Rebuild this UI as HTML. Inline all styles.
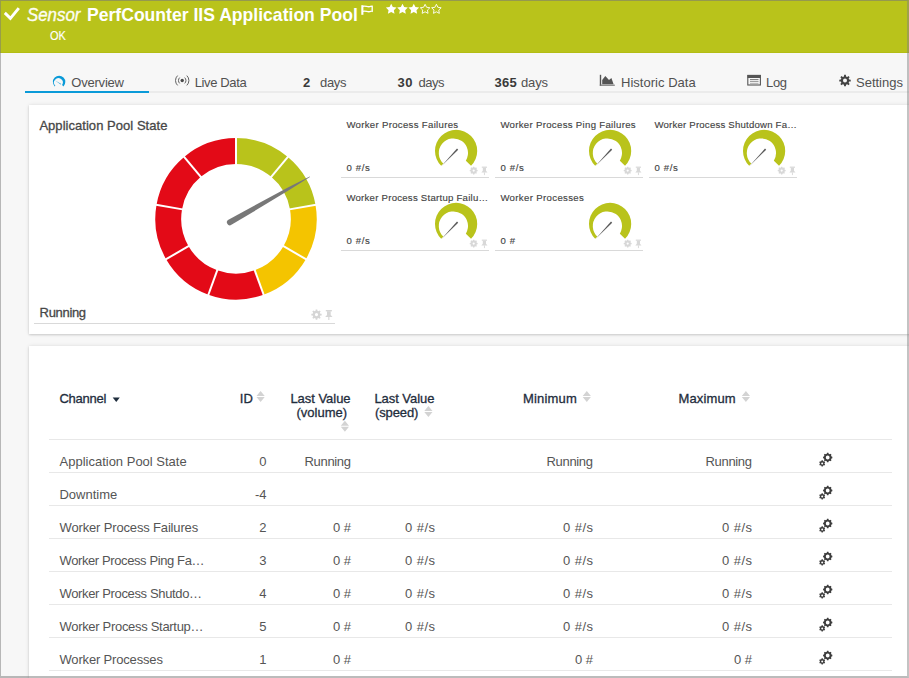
<!DOCTYPE html>
<html><head><meta charset="utf-8"><style>
html,body{margin:0;padding:0;}
body{width:909px;height:678px;overflow:hidden;position:relative;background:#f7f7f7;font-family:"Liberation Sans",sans-serif;}
.t{position:absolute;white-space:nowrap;}
</style></head><body>
<div style="position:absolute;left:0px;top:0px;width:909px;height:678px;background:#f7f7f7;"></div>
<div style="position:absolute;left:0px;top:0px;width:909px;height:53px;background:#b9c31b;"></div>
<div style="position:absolute;left:0px;top:52px;width:909px;height:1px;background:#b3bd14;"></div>
<svg style="position:absolute;left:0;top:0" width="30" height="30"><polyline points="4.8,12.9 10.4,18.3 18.8,8.1" fill="none" stroke="#fff" stroke-width="2.9" stroke-linecap="butt"/></svg>
<div class="t" style="left:27.20px;top:4.26px;font-size:18px;line-height:22px;color:#fdfdf2;font-style:italic;transform:scaleX(0.9363);transform-origin:0 0;-webkit-text-stroke:0.35px #fdfdf2;">Sensor</div>
<div class="t" style="left:87.00px;top:4.19px;font-size:18.2px;line-height:22px;color:#ffffff;font-weight:700;transform:scaleX(0.9664);transform-origin:0 0;">PerfCounter IIS Application Pool</div>
<svg style="position:absolute;left:355px;top:0px" width="25" height="20" viewBox="0 0 25 20"><rect x="6.3" y="5.2" width="2.1" height="9.6" fill="#fff"/><path d="M7.8 6.4 C10.2 5.4 12.4 7.2 14.6 6.7 C15.8 6.4 16.6 6.0 17.2 6.2 L17.2 11.2 C16.6 11.0 15.8 11.4 14.6 11.7 C12.4 12.2 10.2 10.4 7.8 11.4" fill="none" stroke="#fff" stroke-width="1.35"/></svg>
<svg style="position:absolute;left:380px;top:0" width="70" height="20"><polygon points="11.20,3.70 12.85,7.03 16.53,7.57 13.86,10.17 14.49,13.83 11.20,12.10 7.91,13.83 8.54,10.17 5.87,7.57 9.55,7.03" fill="#fff"/><polygon points="22.50,3.70 24.15,7.03 27.83,7.57 25.16,10.17 25.79,13.83 22.50,12.10 19.21,13.83 19.84,10.17 17.17,7.57 20.85,7.03" fill="#fff"/><polygon points="33.80,3.70 35.45,7.03 39.13,7.57 36.46,10.17 37.09,13.83 33.80,12.10 30.51,13.83 31.14,10.17 28.47,7.57 32.15,7.03" fill="#fff"/><polygon points="45.10,4.30 46.57,7.28 49.86,7.75 47.48,10.07 48.04,13.35 45.10,11.80 42.16,13.35 42.72,10.07 40.34,7.75 43.63,7.28" fill="none" stroke="#fff" stroke-width="0.9" stroke-linejoin="round"/><polygon points="56.40,4.30 57.87,7.28 61.16,7.75 58.78,10.07 59.34,13.35 56.40,11.80 53.46,13.35 54.02,10.07 51.64,7.75 54.93,7.28" fill="none" stroke="#fff" stroke-width="0.9" stroke-linejoin="round"/></svg>
<div class="t" style="left:50.30px;top:28.70px;font-size:12.4px;line-height:15px;color:#ffffff;transform:scaleX(0.8875);transform-origin:0 0;-webkit-text-stroke:0.15px #fff;">OK</div>
<div class="t" style="left:71.30px;top:75.00px;font-size:13px;line-height:16px;color:#515151;letter-spacing:-0.211px;">Overview</div>
<div class="t" style="left:194.70px;top:75.00px;font-size:13px;line-height:16px;color:#515151;letter-spacing:-0.365px;">Live Data</div>
<div class="t" style="left:303.00px;top:75.00px;font-size:13px;line-height:16px;color:#3a3a3a;font-weight:700;">2</div>
<div class="t" style="left:320.00px;top:75.00px;font-size:13px;line-height:16px;color:#515151;letter-spacing:-0.354px;">days</div>
<div class="t" style="left:397.60px;top:75.00px;font-size:13px;line-height:16px;color:#3a3a3a;font-weight:700;letter-spacing:0.439px;">30</div>
<div class="t" style="left:418.40px;top:75.00px;font-size:13px;line-height:16px;color:#515151;letter-spacing:-0.454px;">days</div>
<div class="t" style="left:494.60px;top:75.00px;font-size:13px;line-height:16px;color:#3a3a3a;font-weight:700;letter-spacing:0.254px;">365</div>
<div class="t" style="left:521.00px;top:75.00px;font-size:13px;line-height:16px;color:#515151;letter-spacing:-0.154px;">days</div>
<div class="t" style="left:621.00px;top:75.00px;font-size:13px;line-height:16px;color:#515151;letter-spacing:0.024px;">Historic Data</div>
<div class="t" style="left:766.00px;top:75.00px;font-size:13px;line-height:16px;color:#515151;letter-spacing:-0.346px;">Log</div>
<div class="t" style="left:856.00px;top:75.00px;font-size:13px;line-height:16px;color:#515151;">Settings</div>
<div style="position:absolute;left:25px;top:91px;width:884px;height:2px;background:#ebebeb;"></div>
<div style="position:absolute;left:25px;top:91px;width:124px;height:2px;background:#0a9ad8;"></div>
<svg style="position:absolute;left:0;top:0" width="100" height="100"><path d="M54.72,86.38 A6.2 6.2 0 1 1 63.48,86.38 L62.09,84.99 A4.4 4.4 0 1 0 55.34,85.76 Z" fill="#0a9ad8"/><path d="M55.2,80.4 L61.2,83.9 L60.7,84.6 Z" fill="#0a9ad8"/></svg>
<svg style="position:absolute;left:174px;top:72px" width="18" height="16" viewBox="0 0 18 16"><circle cx="8.2" cy="8.5" r="1.7" fill="#4a4a4a"/><path d="M5.7 5.6 A4 4 0 0 0 5.7 11.4" fill="none" stroke="#5a5a5a" stroke-width="0.95"/><path d="M10.7 5.6 A4 4 0 0 1 10.7 11.4" fill="none" stroke="#5a5a5a" stroke-width="0.95"/><path d="M3.6 3.6 A6.8 6.8 0 0 0 3.6 13.4" fill="none" stroke="#5a5a5a" stroke-width="0.95"/><path d="M12.8 3.6 A6.8 6.8 0 0 1 12.8 13.4" fill="none" stroke="#5a5a5a" stroke-width="0.95"/></svg>
<svg style="position:absolute;left:596px;top:68px" width="24" height="24" viewBox="0 0 24 24"><rect x="3.8" y="6.8" width="1.4" height="11" fill="#555"/><rect x="3.8" y="16.6" width="15" height="1.2" fill="#777"/><path d="M6.2 16.2 V12 L9.3 8 L13 12 L15.4 10 L17.6 16.2 Z" fill="#555"/></svg>
<svg style="position:absolute;left:742px;top:68px" width="24" height="24" viewBox="0 0 24 24"><rect x="5.8" y="7.4" width="12.6" height="9.6" fill="none" stroke="#555" stroke-width="1.1"/><rect x="5.5" y="7" width="13.2" height="3" fill="#555"/><rect x="8" y="11.2" width="8.5" height="0.9" fill="#666"/><rect x="8" y="13.2" width="8.5" height="0.9" fill="#888"/><rect x="8" y="15" width="8.5" height="0.8" fill="#aaa"/></svg>
<svg style="position:absolute;left:834px;top:68px" width="24" height="24"><path d="M10.00,8.42 L10.09,6.87 L11.91,6.87 L12.00,8.42 L13.25,8.93 L14.41,7.91 L15.69,9.19 L14.67,10.35 L15.18,11.60 L16.73,11.69 L16.73,13.51 L15.18,13.60 L14.67,14.85 L15.69,16.01 L14.41,17.29 L13.25,16.27 L12.00,16.78 L11.91,18.33 L10.09,18.33 L10.00,16.78 L8.75,16.27 L7.59,17.29 L6.31,16.01 L7.33,14.85 L6.82,13.60 L5.27,13.51 L5.27,11.69 L6.82,11.60 L7.33,10.35 L6.31,9.19 L7.59,7.91 L8.75,8.93 Z M13,12.6 A2 2 0 1 0 9,12.6 A2 2 0 1 0 13,12.6 Z" fill="#444" fill-rule="evenodd"/></svg>
<div style="position:absolute;left:29px;top:105px;width:900px;height:229px;background:#fff;box-shadow:0 1px 2px rgba(0,0,0,0.14), 0 0 4px rgba(0,0,0,0.10);"></div>
<div class="t" style="left:39.40px;top:118.00px;font-size:13px;line-height:16px;color:#474747;letter-spacing:0.038px;-webkit-text-stroke:0.3px #474747;">Application Pool State</div>
<div class="t" style="left:39.60px;top:305.00px;font-size:13px;line-height:16px;color:#474747;letter-spacing:-0.322px;-webkit-text-stroke:0.3px #474747;">Running</div>
<div style="position:absolute;left:34px;top:323px;width:301px;height:1px;background:#d9d9d9;"></div>
<svg style="position:absolute;left:0;top:0" width="909" height="678"><path d="M315.59,310.81 L315.69,309.46 L317.31,309.46 L317.41,310.81 L318.54,311.27 L319.56,310.39 L320.71,311.54 L319.83,312.56 L320.29,313.69 L321.64,313.79 L321.64,315.41 L320.29,315.51 L319.83,316.64 L320.71,317.66 L319.56,318.81 L318.54,317.93 L317.41,318.39 L317.31,319.74 L315.69,319.74 L315.59,318.39 L314.46,317.93 L313.44,318.81 L312.29,317.66 L313.17,316.64 L312.71,315.51 L311.36,315.41 L311.36,313.79 L312.71,313.69 L313.17,312.56 L312.29,311.54 L313.44,310.39 L314.46,311.27 Z M318.1,314.6 A1.6 1.6 0 1 0 314.9,314.6 A1.6 1.6 0 1 0 318.1,314.6 Z" fill="#d6d6d6" fill-rule="evenodd"/><g transform="translate(325.2,310) scale(1.0)" fill="#d6d6d6"><rect x="0.6" y="0" width="6.1" height="1.4"/><rect x="1.8" y="1.2" width="3.7" height="4"/><path d="M0,6.9 L1.8,5 L5.5,5 L7.3,6.9 Z"/><rect x="3.1" y="6.8" width="1.1" height="3.2"/></g></svg>
<svg style="position:absolute;left:0;top:0" width="909" height="678"><path d="M236.00,138.10 A80.7 80.7 0 0 1 287.87,156.98 L271.22,176.82 A54.8 54.8 0 0 0 236.00,164.00 Z" fill="#b9c31b"/><path d="M287.87,156.98 A80.7 80.7 0 0 1 315.47,204.79 L289.97,209.28 A54.8 54.8 0 0 0 271.22,176.82 Z" fill="#b9c31b"/><path d="M315.47,204.79 A80.7 80.7 0 0 1 305.89,259.15 L283.46,246.20 A54.8 54.8 0 0 0 289.97,209.28 Z" fill="#f4c400"/><path d="M305.89,259.15 A80.7 80.7 0 0 1 263.60,294.63 L254.74,270.30 A54.8 54.8 0 0 0 283.46,246.20 Z" fill="#f4c400"/><path d="M263.60,294.63 A80.7 80.7 0 0 1 208.40,294.63 L217.26,270.30 A54.8 54.8 0 0 0 254.74,270.30 Z" fill="#e30a17"/><path d="M208.40,294.63 A80.7 80.7 0 0 1 166.11,259.15 L188.54,246.20 A54.8 54.8 0 0 0 217.26,270.30 Z" fill="#e30a17"/><path d="M166.11,259.15 A80.7 80.7 0 0 1 156.53,204.79 L182.03,209.28 A54.8 54.8 0 0 0 188.54,246.20 Z" fill="#e30a17"/><path d="M156.53,204.79 A80.7 80.7 0 0 1 184.13,156.98 L200.78,176.82 A54.8 54.8 0 0 0 182.03,209.28 Z" fill="#e30a17"/><path d="M184.13,156.98 A80.7 80.7 0 0 1 236.00,138.10 L236.00,164.00 A54.8 54.8 0 0 0 200.78,176.82 Z" fill="#e30a17"/><line x1="236.00" y1="166.00" x2="236.00" y2="136.10" stroke="#fff" stroke-width="2"/><line x1="269.94" y1="178.35" x2="289.16" y2="155.45" stroke="#fff" stroke-width="2"/><line x1="288.00" y1="209.63" x2="317.44" y2="204.44" stroke="#fff" stroke-width="2"/><line x1="281.73" y1="245.20" x2="307.62" y2="260.15" stroke="#fff" stroke-width="2"/><line x1="254.06" y1="268.42" x2="264.29" y2="296.51" stroke="#fff" stroke-width="2"/><line x1="217.94" y1="268.42" x2="207.71" y2="296.51" stroke="#fff" stroke-width="2"/><line x1="190.27" y1="245.20" x2="164.38" y2="260.15" stroke="#fff" stroke-width="2"/><line x1="184.00" y1="209.63" x2="154.56" y2="204.44" stroke="#fff" stroke-width="2"/><line x1="202.06" y1="178.35" x2="182.84" y2="155.45" stroke="#fff" stroke-width="2"/><g transform="translate(236,218.8) rotate(-29.700000000000003)"><path d="M-7,-3.0 L30,-2.2 L60,-1.4 L85,-0.25 L85,0.25 L60,1.4 L30,2.2 L-7,3.0 A3.0 3.0 0 0 1 -7,-3.0 Z" fill="#787878"/></g></svg>
<div class="t" style="left:346.40px;top:119.17px;font-size:9.6px;line-height:12px;color:#444444;letter-spacing:0.313px;-webkit-text-stroke:0.15px #444;">Worker Process Failures</div>
<div class="t" style="left:346.40px;top:162.17px;font-size:9.6px;line-height:12px;color:#444444;letter-spacing:0.672px;-webkit-text-stroke:0.15px #444;">0 #/s</div>
<div style="position:absolute;left:341px;top:177px;width:148px;height:1px;background:#d9d9d9;"></div>
<svg style="position:absolute;left:0;top:0" width="909" height="678"><path d="M441.18,165.82 A21.1 21.1 0 1 1 471.02,165.82 L465.84,160.64 A14.6 14.6 0 1 0 443.38,163.62 Z" fill="#b9c31b"/><path d="M458.20,149.70 L441.48,166.12 L457.00,148.50 Z" fill="#5a5a5a"/><path d="M472.95,167.49 L473.07,166.65 L474.33,166.65 L474.45,167.49 L475.37,167.87 L476.05,167.36 L476.94,168.25 L476.43,168.93 L476.81,169.85 L477.65,169.97 L477.65,171.23 L476.81,171.35 L476.43,172.27 L476.94,172.95 L476.05,173.84 L475.37,173.33 L474.45,173.71 L474.33,174.55 L473.07,174.55 L472.95,173.71 L472.03,173.33 L471.35,173.84 L470.46,172.95 L470.97,172.27 L470.59,171.35 L469.75,171.23 L469.75,169.97 L470.59,169.85 L470.97,168.93 L470.46,168.25 L471.35,167.36 L472.03,167.87 Z M474.8,170.6 A1.1 1.1 0 1 0 472.59999999999997,170.6 A1.1 1.1 0 1 0 474.8,170.6 Z" fill="#d8d8d8" fill-rule="evenodd"/><g transform="translate(481.3,166.6) scale(0.85)" fill="#d8d8d8"><rect x="0.6" y="0" width="6.1" height="1.4"/><rect x="1.8" y="1.2" width="3.7" height="4"/><path d="M0,6.9 L1.8,5 L5.5,5 L7.3,6.9 Z"/><rect x="3.1" y="6.8" width="1.1" height="3.2"/></g></svg>
<div class="t" style="left:500.40px;top:119.17px;font-size:9.6px;line-height:12px;color:#444444;letter-spacing:0.315px;-webkit-text-stroke:0.15px #444;">Worker Process Ping Failures</div>
<div class="t" style="left:500.40px;top:162.17px;font-size:9.6px;line-height:12px;color:#444444;letter-spacing:0.672px;-webkit-text-stroke:0.15px #444;">0 #/s</div>
<div style="position:absolute;left:495px;top:177px;width:148px;height:1px;background:#d9d9d9;"></div>
<svg style="position:absolute;left:0;top:0" width="909" height="678"><path d="M595.18,165.82 A21.1 21.1 0 1 1 625.02,165.82 L619.84,160.64 A14.6 14.6 0 1 0 597.38,163.62 Z" fill="#b9c31b"/><path d="M612.20,149.70 L595.48,166.12 L611.00,148.50 Z" fill="#5a5a5a"/><path d="M626.95,167.49 L627.07,166.65 L628.33,166.65 L628.45,167.49 L629.37,167.87 L630.05,167.36 L630.94,168.25 L630.43,168.93 L630.81,169.85 L631.65,169.97 L631.65,171.23 L630.81,171.35 L630.43,172.27 L630.94,172.95 L630.05,173.84 L629.37,173.33 L628.45,173.71 L628.33,174.55 L627.07,174.55 L626.95,173.71 L626.03,173.33 L625.35,173.84 L624.46,172.95 L624.97,172.27 L624.59,171.35 L623.75,171.23 L623.75,169.97 L624.59,169.85 L624.97,168.93 L624.46,168.25 L625.35,167.36 L626.03,167.87 Z M628.8000000000001,170.6 A1.1 1.1 0 1 0 626.6,170.6 A1.1 1.1 0 1 0 628.8000000000001,170.6 Z" fill="#d8d8d8" fill-rule="evenodd"/><g transform="translate(635.3,166.6) scale(0.85)" fill="#d8d8d8"><rect x="0.6" y="0" width="6.1" height="1.4"/><rect x="1.8" y="1.2" width="3.7" height="4"/><path d="M0,6.9 L1.8,5 L5.5,5 L7.3,6.9 Z"/><rect x="3.1" y="6.8" width="1.1" height="3.2"/></g></svg>
<div class="t" style="left:654.40px;top:119.17px;font-size:9.6px;line-height:12px;color:#444444;letter-spacing:0.214px;-webkit-text-stroke:0.15px #444;">Worker Process Shutdown Fa…</div>
<div class="t" style="left:654.40px;top:162.17px;font-size:9.6px;line-height:12px;color:#444444;letter-spacing:0.672px;-webkit-text-stroke:0.15px #444;">0 #/s</div>
<div style="position:absolute;left:649px;top:177px;width:148px;height:1px;background:#d9d9d9;"></div>
<svg style="position:absolute;left:0;top:0" width="909" height="678"><path d="M749.18,165.82 A21.1 21.1 0 1 1 779.02,165.82 L773.84,160.64 A14.6 14.6 0 1 0 751.38,163.62 Z" fill="#b9c31b"/><path d="M766.20,149.70 L749.48,166.12 L765.00,148.50 Z" fill="#5a5a5a"/><path d="M780.95,167.49 L781.07,166.65 L782.33,166.65 L782.45,167.49 L783.37,167.87 L784.05,167.36 L784.94,168.25 L784.43,168.93 L784.81,169.85 L785.65,169.97 L785.65,171.23 L784.81,171.35 L784.43,172.27 L784.94,172.95 L784.05,173.84 L783.37,173.33 L782.45,173.71 L782.33,174.55 L781.07,174.55 L780.95,173.71 L780.03,173.33 L779.35,173.84 L778.46,172.95 L778.97,172.27 L778.59,171.35 L777.75,171.23 L777.75,169.97 L778.59,169.85 L778.97,168.93 L778.46,168.25 L779.35,167.36 L780.03,167.87 Z M782.8000000000001,170.6 A1.1 1.1 0 1 0 780.6,170.6 A1.1 1.1 0 1 0 782.8000000000001,170.6 Z" fill="#d8d8d8" fill-rule="evenodd"/><g transform="translate(789.3,166.6) scale(0.85)" fill="#d8d8d8"><rect x="0.6" y="0" width="6.1" height="1.4"/><rect x="1.8" y="1.2" width="3.7" height="4"/><path d="M0,6.9 L1.8,5 L5.5,5 L7.3,6.9 Z"/><rect x="3.1" y="6.8" width="1.1" height="3.2"/></g></svg>
<div class="t" style="left:346.40px;top:192.17px;font-size:9.6px;line-height:12px;color:#444444;letter-spacing:0.250px;-webkit-text-stroke:0.15px #444;">Worker Process Startup Failu…</div>
<div class="t" style="left:346.40px;top:235.17px;font-size:9.6px;line-height:12px;color:#444444;letter-spacing:0.672px;-webkit-text-stroke:0.15px #444;">0 #/s</div>
<div style="position:absolute;left:341px;top:250px;width:148px;height:1px;background:#d9d9d9;"></div>
<svg style="position:absolute;left:0;top:0" width="909" height="678"><path d="M441.18,238.82 A21.1 21.1 0 1 1 471.02,238.82 L465.84,233.64 A14.6 14.6 0 1 0 443.38,236.62 Z" fill="#b9c31b"/><path d="M458.20,222.70 L441.48,239.12 L457.00,221.50 Z" fill="#5a5a5a"/><path d="M472.95,240.49 L473.07,239.65 L474.33,239.65 L474.45,240.49 L475.37,240.87 L476.05,240.36 L476.94,241.25 L476.43,241.93 L476.81,242.85 L477.65,242.97 L477.65,244.23 L476.81,244.35 L476.43,245.27 L476.94,245.95 L476.05,246.84 L475.37,246.33 L474.45,246.71 L474.33,247.55 L473.07,247.55 L472.95,246.71 L472.03,246.33 L471.35,246.84 L470.46,245.95 L470.97,245.27 L470.59,244.35 L469.75,244.23 L469.75,242.97 L470.59,242.85 L470.97,241.93 L470.46,241.25 L471.35,240.36 L472.03,240.87 Z M474.8,243.6 A1.1 1.1 0 1 0 472.59999999999997,243.6 A1.1 1.1 0 1 0 474.8,243.6 Z" fill="#d8d8d8" fill-rule="evenodd"/><g transform="translate(481.3,239.6) scale(0.85)" fill="#d8d8d8"><rect x="0.6" y="0" width="6.1" height="1.4"/><rect x="1.8" y="1.2" width="3.7" height="4"/><path d="M0,6.9 L1.8,5 L5.5,5 L7.3,6.9 Z"/><rect x="3.1" y="6.8" width="1.1" height="3.2"/></g></svg>
<div class="t" style="left:500.40px;top:192.17px;font-size:9.6px;line-height:12px;color:#444444;letter-spacing:0.351px;-webkit-text-stroke:0.15px #444;">Worker Processes</div>
<div class="t" style="left:500.40px;top:235.17px;font-size:9.6px;line-height:12px;color:#444444;letter-spacing:0.728px;-webkit-text-stroke:0.15px #444;">0 #</div>
<div style="position:absolute;left:495px;top:250px;width:148px;height:1px;background:#d9d9d9;"></div>
<svg style="position:absolute;left:0;top:0" width="909" height="678"><path d="M595.18,238.82 A21.1 21.1 0 1 1 625.02,238.82 L619.84,233.64 A14.6 14.6 0 1 0 597.38,236.62 Z" fill="#b9c31b"/><path d="M612.20,222.70 L595.48,239.12 L611.00,221.50 Z" fill="#5a5a5a"/><path d="M626.95,240.49 L627.07,239.65 L628.33,239.65 L628.45,240.49 L629.37,240.87 L630.05,240.36 L630.94,241.25 L630.43,241.93 L630.81,242.85 L631.65,242.97 L631.65,244.23 L630.81,244.35 L630.43,245.27 L630.94,245.95 L630.05,246.84 L629.37,246.33 L628.45,246.71 L628.33,247.55 L627.07,247.55 L626.95,246.71 L626.03,246.33 L625.35,246.84 L624.46,245.95 L624.97,245.27 L624.59,244.35 L623.75,244.23 L623.75,242.97 L624.59,242.85 L624.97,241.93 L624.46,241.25 L625.35,240.36 L626.03,240.87 Z M628.8000000000001,243.6 A1.1 1.1 0 1 0 626.6,243.6 A1.1 1.1 0 1 0 628.8000000000001,243.6 Z" fill="#d8d8d8" fill-rule="evenodd"/><g transform="translate(635.3,239.6) scale(0.85)" fill="#d8d8d8"><rect x="0.6" y="0" width="6.1" height="1.4"/><rect x="1.8" y="1.2" width="3.7" height="4"/><path d="M0,6.9 L1.8,5 L5.5,5 L7.3,6.9 Z"/><rect x="3.1" y="6.8" width="1.1" height="3.2"/></g></svg>
<div style="position:absolute;left:29px;top:346px;width:900px;height:340px;background:#fff;box-shadow:0 1px 2px rgba(0,0,0,0.14), 0 0 4px rgba(0,0,0,0.10);"></div>
<div class="t" style="left:59.40px;top:391.00px;font-size:13px;line-height:16px;color:#1f2d3d;letter-spacing:-0.238px;-webkit-text-stroke:0.3px #1f2d3d;">Channel</div>
<svg style="position:absolute;left:110px;top:394px" width="12" height="10"><path d="M2.7 3.6 H9.8 L6.25 7.9 Z" fill="#1f2d3d"/></svg>
<div class="t" style="left:239.80px;top:391.00px;font-size:13px;line-height:16px;color:#1f2d3d;-webkit-text-stroke:0.3px #1f2d3d;">ID</div>
<div class="t" style="left:290.40px;top:391.00px;font-size:13px;line-height:16px;color:#1f2d3d;letter-spacing:-0.030px;-webkit-text-stroke:0.3px #1f2d3d;">Last Value</div>
<div class="t" style="left:296.50px;top:405.00px;font-size:13px;line-height:16px;color:#1f2d3d;letter-spacing:0.019px;-webkit-text-stroke:0.3px #1f2d3d;">(volume)</div>
<div class="t" style="left:374.40px;top:391.00px;font-size:13px;line-height:16px;color:#1f2d3d;letter-spacing:-0.041px;-webkit-text-stroke:0.3px #1f2d3d;">Last Value</div>
<div class="t" style="left:375.00px;top:405.00px;font-size:13px;line-height:16px;color:#1f2d3d;letter-spacing:-0.113px;-webkit-text-stroke:0.3px #1f2d3d;">(speed)</div>
<div class="t" style="left:522.90px;top:391.00px;font-size:13px;line-height:16px;color:#1f2d3d;letter-spacing:0.212px;-webkit-text-stroke:0.3px #1f2d3d;">Minimum</div>
<div class="t" style="left:678.60px;top:391.00px;font-size:13px;line-height:16px;color:#1f2d3d;letter-spacing:0.111px;-webkit-text-stroke:0.3px #1f2d3d;">Maximum</div>
<svg style="position:absolute;left:0;top:0" width="909" height="678"><path d="M256.5 396 L260.6 391 L264.7 396 Z M256.5 397.1 L260.6 402.1 L264.7 397.1 Z" fill="#d3d3d3"/></svg>
<svg style="position:absolute;left:0;top:0" width="909" height="678"><path d="M340.8 425.7 L344.90000000000003 420.7 L349.0 425.7 Z M340.8 426.8 L344.90000000000003 431.8 L349.0 426.8 Z" fill="#d3d3d3"/></svg>
<svg style="position:absolute;left:0;top:0" width="909" height="678"><path d="M424.3 411 L428.40000000000003 406 L432.5 411 Z M424.3 412.1 L428.40000000000003 417.1 L432.5 412.1 Z" fill="#d3d3d3"/></svg>
<svg style="position:absolute;left:0;top:0" width="909" height="678"><path d="M582.7 395.9 L586.8000000000001 390.9 L590.9000000000001 395.9 Z M582.7 397.0 L586.8000000000001 402.0 L590.9000000000001 397.0 Z" fill="#d3d3d3"/></svg>
<svg style="position:absolute;left:0;top:0" width="909" height="678"><path d="M741.8 395.9 L745.9 390.9 L750.0 395.9 Z M741.8 397.0 L745.9 402.0 L750.0 397.0 Z" fill="#d3d3d3"/></svg>
<div style="position:absolute;left:49px;top:439px;width:843px;height:1px;background:#e8e8e8;"></div>
<div style="position:absolute;left:49px;top:472px;width:843px;height:1px;background:#e8e8e8;"></div>
<div style="position:absolute;left:49px;top:505px;width:843px;height:1px;background:#e8e8e8;"></div>
<div style="position:absolute;left:49px;top:538px;width:843px;height:1px;background:#e8e8e8;"></div>
<div style="position:absolute;left:49px;top:571px;width:843px;height:1px;background:#e8e8e8;"></div>
<div style="position:absolute;left:49px;top:604px;width:843px;height:1px;background:#e8e8e8;"></div>
<div style="position:absolute;left:49px;top:637px;width:843px;height:1px;background:#e8e8e8;"></div>
<div style="position:absolute;left:49px;top:670px;width:843px;height:1px;background:#e8e8e8;"></div>
<div class="t" style="left:59.50px;top:454.00px;font-size:13px;line-height:16px;color:#555555;">Application Pool State</div>
<div class="t" style="left:259.27px;top:454.00px;font-size:13px;line-height:16px;color:#555555;">0</div>
<div class="t" style="left:304.50px;top:454.00px;font-size:13px;line-height:16px;color:#555555;letter-spacing:-0.322px;">Running</div>
<div class="t" style="left:546.50px;top:454.00px;font-size:13px;line-height:16px;color:#555555;letter-spacing:-0.322px;">Running</div>
<div class="t" style="left:705.50px;top:454.00px;font-size:13px;line-height:16px;color:#555555;letter-spacing:-0.322px;">Running</div>
<svg style="position:absolute;left:812px;top:449.4px" width="24" height="18"><path d="M14.79,4.71 L14.96,3.86 L16.44,3.86 L16.61,4.71 L17.74,5.17 L18.46,4.70 L19.50,5.74 L19.03,6.46 L19.49,7.59 L20.34,7.76 L20.34,9.24 L19.49,9.41 L19.03,10.54 L19.50,11.26 L18.46,12.30 L17.74,11.83 L16.61,12.29 L16.44,13.14 L14.96,13.14 L14.79,12.29 L13.66,11.83 L12.94,12.30 L11.90,11.26 L12.37,10.54 L11.91,9.41 L11.06,9.24 L11.06,7.76 L11.91,7.59 L12.37,6.46 L11.90,5.74 L12.94,4.70 L13.66,5.17 Z M17.599999999999998,8.5 A1.9 1.9 0 1 0 13.799999999999999,8.5 A1.9 1.9 0 1 0 17.599999999999998,8.5 Z" fill="#3d3d3d" fill-rule="evenodd"/><path d="M9.46,12.12 L9.56,11.37 L10.84,11.37 L10.94,12.12 L11.81,12.62 L12.50,12.33 L13.15,13.44 L12.55,13.90 L12.55,14.90 L13.15,15.36 L12.50,16.47 L11.81,16.18 L10.94,16.68 L10.84,17.43 L9.56,17.43 L9.46,16.68 L8.59,16.18 L7.90,16.47 L7.25,15.36 L7.85,14.90 L7.85,13.90 L7.25,13.44 L7.90,12.33 L8.59,12.62 Z M11.2,14.4 A1.0 1.0 0 1 0 9.2,14.4 A1.0 1.0 0 1 0 11.2,14.4 Z" fill="#3d3d3d" fill-rule="evenodd"/></svg>
<div class="t" style="left:59.50px;top:487.00px;font-size:13px;line-height:16px;color:#555555;letter-spacing:-0.014px;">Downtime</div>
<div class="t" style="left:254.94px;top:487.00px;font-size:13px;line-height:16px;color:#555555;">-4</div>
<svg style="position:absolute;left:812px;top:482.4px" width="24" height="18"><path d="M14.79,4.71 L14.96,3.86 L16.44,3.86 L16.61,4.71 L17.74,5.17 L18.46,4.70 L19.50,5.74 L19.03,6.46 L19.49,7.59 L20.34,7.76 L20.34,9.24 L19.49,9.41 L19.03,10.54 L19.50,11.26 L18.46,12.30 L17.74,11.83 L16.61,12.29 L16.44,13.14 L14.96,13.14 L14.79,12.29 L13.66,11.83 L12.94,12.30 L11.90,11.26 L12.37,10.54 L11.91,9.41 L11.06,9.24 L11.06,7.76 L11.91,7.59 L12.37,6.46 L11.90,5.74 L12.94,4.70 L13.66,5.17 Z M17.599999999999998,8.5 A1.9 1.9 0 1 0 13.799999999999999,8.5 A1.9 1.9 0 1 0 17.599999999999998,8.5 Z" fill="#3d3d3d" fill-rule="evenodd"/><path d="M9.46,12.12 L9.56,11.37 L10.84,11.37 L10.94,12.12 L11.81,12.62 L12.50,12.33 L13.15,13.44 L12.55,13.90 L12.55,14.90 L13.15,15.36 L12.50,16.47 L11.81,16.18 L10.94,16.68 L10.84,17.43 L9.56,17.43 L9.46,16.68 L8.59,16.18 L7.90,16.47 L7.25,15.36 L7.85,14.90 L7.85,13.90 L7.25,13.44 L7.90,12.33 L8.59,12.62 Z M11.2,14.4 A1.0 1.0 0 1 0 9.2,14.4 A1.0 1.0 0 1 0 11.2,14.4 Z" fill="#3d3d3d" fill-rule="evenodd"/></svg>
<div class="t" style="left:59.50px;top:520.00px;font-size:13px;line-height:16px;color:#555555;letter-spacing:-0.154px;">Worker Process Failures</div>
<div class="t" style="left:259.27px;top:520.00px;font-size:13px;line-height:16px;color:#555555;">2</div>
<div class="t" style="left:333.10px;top:520.00px;font-size:13px;line-height:16px;color:#555555;letter-spacing:-0.087px;">0 #</div>
<div class="t" style="left:405.10px;top:520.00px;font-size:13px;line-height:16px;color:#555555;letter-spacing:0.429px;">0 #/s</div>
<div class="t" style="left:563.10px;top:520.00px;font-size:13px;line-height:16px;color:#555555;letter-spacing:0.429px;">0 #/s</div>
<div class="t" style="left:722.10px;top:520.00px;font-size:13px;line-height:16px;color:#555555;letter-spacing:0.429px;">0 #/s</div>
<svg style="position:absolute;left:812px;top:515.4px" width="24" height="18"><path d="M14.79,4.71 L14.96,3.86 L16.44,3.86 L16.61,4.71 L17.74,5.17 L18.46,4.70 L19.50,5.74 L19.03,6.46 L19.49,7.59 L20.34,7.76 L20.34,9.24 L19.49,9.41 L19.03,10.54 L19.50,11.26 L18.46,12.30 L17.74,11.83 L16.61,12.29 L16.44,13.14 L14.96,13.14 L14.79,12.29 L13.66,11.83 L12.94,12.30 L11.90,11.26 L12.37,10.54 L11.91,9.41 L11.06,9.24 L11.06,7.76 L11.91,7.59 L12.37,6.46 L11.90,5.74 L12.94,4.70 L13.66,5.17 Z M17.599999999999998,8.5 A1.9 1.9 0 1 0 13.799999999999999,8.5 A1.9 1.9 0 1 0 17.599999999999998,8.5 Z" fill="#3d3d3d" fill-rule="evenodd"/><path d="M9.46,12.12 L9.56,11.37 L10.84,11.37 L10.94,12.12 L11.81,12.62 L12.50,12.33 L13.15,13.44 L12.55,13.90 L12.55,14.90 L13.15,15.36 L12.50,16.47 L11.81,16.18 L10.94,16.68 L10.84,17.43 L9.56,17.43 L9.46,16.68 L8.59,16.18 L7.90,16.47 L7.25,15.36 L7.85,14.90 L7.85,13.90 L7.25,13.44 L7.90,12.33 L8.59,12.62 Z M11.2,14.4 A1.0 1.0 0 1 0 9.2,14.4 A1.0 1.0 0 1 0 11.2,14.4 Z" fill="#3d3d3d" fill-rule="evenodd"/></svg>
<div class="t" style="left:59.50px;top:553.00px;font-size:13px;line-height:16px;color:#555555;letter-spacing:-0.393px;">Worker Process Ping Fa…</div>
<div class="t" style="left:259.27px;top:553.00px;font-size:13px;line-height:16px;color:#555555;">3</div>
<div class="t" style="left:333.10px;top:553.00px;font-size:13px;line-height:16px;color:#555555;letter-spacing:-0.087px;">0 #</div>
<div class="t" style="left:405.10px;top:553.00px;font-size:13px;line-height:16px;color:#555555;letter-spacing:0.429px;">0 #/s</div>
<div class="t" style="left:563.10px;top:553.00px;font-size:13px;line-height:16px;color:#555555;letter-spacing:0.429px;">0 #/s</div>
<div class="t" style="left:722.10px;top:553.00px;font-size:13px;line-height:16px;color:#555555;letter-spacing:0.429px;">0 #/s</div>
<svg style="position:absolute;left:812px;top:548.4px" width="24" height="18"><path d="M14.79,4.71 L14.96,3.86 L16.44,3.86 L16.61,4.71 L17.74,5.17 L18.46,4.70 L19.50,5.74 L19.03,6.46 L19.49,7.59 L20.34,7.76 L20.34,9.24 L19.49,9.41 L19.03,10.54 L19.50,11.26 L18.46,12.30 L17.74,11.83 L16.61,12.29 L16.44,13.14 L14.96,13.14 L14.79,12.29 L13.66,11.83 L12.94,12.30 L11.90,11.26 L12.37,10.54 L11.91,9.41 L11.06,9.24 L11.06,7.76 L11.91,7.59 L12.37,6.46 L11.90,5.74 L12.94,4.70 L13.66,5.17 Z M17.599999999999998,8.5 A1.9 1.9 0 1 0 13.799999999999999,8.5 A1.9 1.9 0 1 0 17.599999999999998,8.5 Z" fill="#3d3d3d" fill-rule="evenodd"/><path d="M9.46,12.12 L9.56,11.37 L10.84,11.37 L10.94,12.12 L11.81,12.62 L12.50,12.33 L13.15,13.44 L12.55,13.90 L12.55,14.90 L13.15,15.36 L12.50,16.47 L11.81,16.18 L10.94,16.68 L10.84,17.43 L9.56,17.43 L9.46,16.68 L8.59,16.18 L7.90,16.47 L7.25,15.36 L7.85,14.90 L7.85,13.90 L7.25,13.44 L7.90,12.33 L8.59,12.62 Z M11.2,14.4 A1.0 1.0 0 1 0 9.2,14.4 A1.0 1.0 0 1 0 11.2,14.4 Z" fill="#3d3d3d" fill-rule="evenodd"/></svg>
<div class="t" style="left:59.50px;top:586.00px;font-size:13px;line-height:16px;color:#555555;letter-spacing:-0.355px;">Worker Process Shutdo…</div>
<div class="t" style="left:259.27px;top:586.00px;font-size:13px;line-height:16px;color:#555555;">4</div>
<div class="t" style="left:333.10px;top:586.00px;font-size:13px;line-height:16px;color:#555555;letter-spacing:-0.087px;">0 #</div>
<div class="t" style="left:405.10px;top:586.00px;font-size:13px;line-height:16px;color:#555555;letter-spacing:0.429px;">0 #/s</div>
<div class="t" style="left:563.10px;top:586.00px;font-size:13px;line-height:16px;color:#555555;letter-spacing:0.429px;">0 #/s</div>
<div class="t" style="left:722.10px;top:586.00px;font-size:13px;line-height:16px;color:#555555;letter-spacing:0.429px;">0 #/s</div>
<svg style="position:absolute;left:812px;top:581.4px" width="24" height="18"><path d="M14.79,4.71 L14.96,3.86 L16.44,3.86 L16.61,4.71 L17.74,5.17 L18.46,4.70 L19.50,5.74 L19.03,6.46 L19.49,7.59 L20.34,7.76 L20.34,9.24 L19.49,9.41 L19.03,10.54 L19.50,11.26 L18.46,12.30 L17.74,11.83 L16.61,12.29 L16.44,13.14 L14.96,13.14 L14.79,12.29 L13.66,11.83 L12.94,12.30 L11.90,11.26 L12.37,10.54 L11.91,9.41 L11.06,9.24 L11.06,7.76 L11.91,7.59 L12.37,6.46 L11.90,5.74 L12.94,4.70 L13.66,5.17 Z M17.599999999999998,8.5 A1.9 1.9 0 1 0 13.799999999999999,8.5 A1.9 1.9 0 1 0 17.599999999999998,8.5 Z" fill="#3d3d3d" fill-rule="evenodd"/><path d="M9.46,12.12 L9.56,11.37 L10.84,11.37 L10.94,12.12 L11.81,12.62 L12.50,12.33 L13.15,13.44 L12.55,13.90 L12.55,14.90 L13.15,15.36 L12.50,16.47 L11.81,16.18 L10.94,16.68 L10.84,17.43 L9.56,17.43 L9.46,16.68 L8.59,16.18 L7.90,16.47 L7.25,15.36 L7.85,14.90 L7.85,13.90 L7.25,13.44 L7.90,12.33 L8.59,12.62 Z M11.2,14.4 A1.0 1.0 0 1 0 9.2,14.4 A1.0 1.0 0 1 0 11.2,14.4 Z" fill="#3d3d3d" fill-rule="evenodd"/></svg>
<div class="t" style="left:59.50px;top:619.00px;font-size:13px;line-height:16px;color:#555555;letter-spacing:-0.307px;">Worker Process Startup…</div>
<div class="t" style="left:259.27px;top:619.00px;font-size:13px;line-height:16px;color:#555555;">5</div>
<div class="t" style="left:333.10px;top:619.00px;font-size:13px;line-height:16px;color:#555555;letter-spacing:-0.087px;">0 #</div>
<div class="t" style="left:405.10px;top:619.00px;font-size:13px;line-height:16px;color:#555555;letter-spacing:0.429px;">0 #/s</div>
<div class="t" style="left:563.10px;top:619.00px;font-size:13px;line-height:16px;color:#555555;letter-spacing:0.429px;">0 #/s</div>
<div class="t" style="left:722.10px;top:619.00px;font-size:13px;line-height:16px;color:#555555;letter-spacing:0.429px;">0 #/s</div>
<svg style="position:absolute;left:812px;top:614.4px" width="24" height="18"><path d="M14.79,4.71 L14.96,3.86 L16.44,3.86 L16.61,4.71 L17.74,5.17 L18.46,4.70 L19.50,5.74 L19.03,6.46 L19.49,7.59 L20.34,7.76 L20.34,9.24 L19.49,9.41 L19.03,10.54 L19.50,11.26 L18.46,12.30 L17.74,11.83 L16.61,12.29 L16.44,13.14 L14.96,13.14 L14.79,12.29 L13.66,11.83 L12.94,12.30 L11.90,11.26 L12.37,10.54 L11.91,9.41 L11.06,9.24 L11.06,7.76 L11.91,7.59 L12.37,6.46 L11.90,5.74 L12.94,4.70 L13.66,5.17 Z M17.599999999999998,8.5 A1.9 1.9 0 1 0 13.799999999999999,8.5 A1.9 1.9 0 1 0 17.599999999999998,8.5 Z" fill="#3d3d3d" fill-rule="evenodd"/><path d="M9.46,12.12 L9.56,11.37 L10.84,11.37 L10.94,12.12 L11.81,12.62 L12.50,12.33 L13.15,13.44 L12.55,13.90 L12.55,14.90 L13.15,15.36 L12.50,16.47 L11.81,16.18 L10.94,16.68 L10.84,17.43 L9.56,17.43 L9.46,16.68 L8.59,16.18 L7.90,16.47 L7.25,15.36 L7.85,14.90 L7.85,13.90 L7.25,13.44 L7.90,12.33 L8.59,12.62 Z M11.2,14.4 A1.0 1.0 0 1 0 9.2,14.4 A1.0 1.0 0 1 0 11.2,14.4 Z" fill="#3d3d3d" fill-rule="evenodd"/></svg>
<div class="t" style="left:59.50px;top:652.00px;font-size:13px;line-height:16px;color:#555555;letter-spacing:-0.171px;">Worker Processes</div>
<div class="t" style="left:259.27px;top:652.00px;font-size:13px;line-height:16px;color:#555555;">1</div>
<div class="t" style="left:333.10px;top:652.00px;font-size:13px;line-height:16px;color:#555555;letter-spacing:-0.087px;">0 #</div>
<div class="t" style="left:575.10px;top:652.00px;font-size:13px;line-height:16px;color:#555555;letter-spacing:-0.087px;">0 #</div>
<div class="t" style="left:734.10px;top:652.00px;font-size:13px;line-height:16px;color:#555555;letter-spacing:-0.087px;">0 #</div>
<svg style="position:absolute;left:812px;top:647.4px" width="24" height="18"><path d="M14.79,4.71 L14.96,3.86 L16.44,3.86 L16.61,4.71 L17.74,5.17 L18.46,4.70 L19.50,5.74 L19.03,6.46 L19.49,7.59 L20.34,7.76 L20.34,9.24 L19.49,9.41 L19.03,10.54 L19.50,11.26 L18.46,12.30 L17.74,11.83 L16.61,12.29 L16.44,13.14 L14.96,13.14 L14.79,12.29 L13.66,11.83 L12.94,12.30 L11.90,11.26 L12.37,10.54 L11.91,9.41 L11.06,9.24 L11.06,7.76 L11.91,7.59 L12.37,6.46 L11.90,5.74 L12.94,4.70 L13.66,5.17 Z M17.599999999999998,8.5 A1.9 1.9 0 1 0 13.799999999999999,8.5 A1.9 1.9 0 1 0 17.599999999999998,8.5 Z" fill="#3d3d3d" fill-rule="evenodd"/><path d="M9.46,12.12 L9.56,11.37 L10.84,11.37 L10.94,12.12 L11.81,12.62 L12.50,12.33 L13.15,13.44 L12.55,13.90 L12.55,14.90 L13.15,15.36 L12.50,16.47 L11.81,16.18 L10.94,16.68 L10.84,17.43 L9.56,17.43 L9.46,16.68 L8.59,16.18 L7.90,16.47 L7.25,15.36 L7.85,14.90 L7.85,13.90 L7.25,13.44 L7.90,12.33 L8.59,12.62 Z M11.2,14.4 A1.0 1.0 0 1 0 9.2,14.4 A1.0 1.0 0 1 0 11.2,14.4 Z" fill="#3d3d3d" fill-rule="evenodd"/></svg>
<div style="position:absolute;left:0px;top:0px;width:909px;height:678px;background:transparent;box-sizing:border-box;border-left:1px solid rgba(120,120,120,0.5);border-top:1px solid rgba(120,120,120,0.55);border-right:2px solid rgba(128,128,128,0.47);border-bottom:2px solid rgba(120,120,120,0.5);"></div>
</body></html>
